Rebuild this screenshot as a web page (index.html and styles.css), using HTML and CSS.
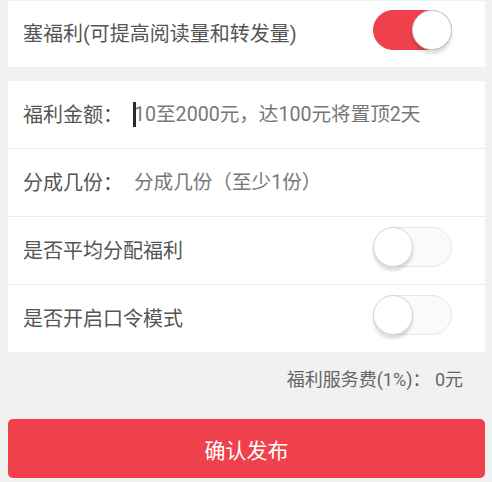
FILE: index.html
```html
<!DOCTYPE html>
<html lang="zh-CN">
<head>
    <meta charset="UTF-8">
    <meta name="viewport" content="width=device-width, initial-scale=1.0">
    <title>塞福利</title>
    <link rel="stylesheet" href="styles.css">
</head>
<body>
    <div class="page">
        <div class="card">
            <div class="row">
                <span class="label">塞福利(可提高阅读量和转发量)</span>
                <div class="switch on"><span class="knob"></span></div>
            </div>
        </div>

        <div class="card list">
            <div class="row">
                <span class="label field-label">福利金额：</span>
                <div class="field">
                    <span class="caret"></span>
                    <input type="text" placeholder="10至2000元，达100元将置顶2天">
                </div>
            </div>
            <div class="row">
                <span class="label field-label">分成几份：</span>
                <div class="field">
                    <input type="text" placeholder="分成几份（至少1份）">
                </div>
            </div>
            <div class="row">
                <span class="label">是否平均分配福利</span>
                <div class="switch"><span class="knob"></span></div>
            </div>
            <div class="row">
                <span class="label">是否开启口令模式</span>
                <div class="switch"><span class="knob"></span></div>
            </div>
        </div>

        <p class="fee">福利服务费(1%)：&nbsp;0元</p>

        <button class="submit">确认发布</button>
    </div>
</body>
</html>
```

FILE: styles.css
```css
body {
    margin: 0;
    padding: 0;
    background-color: #f1f1f1;
    font-family: Roboto, "Noto Sans CJK SC", sans-serif;
    color: #555;
}
.page {
    padding: 1px 7px 0 8px;
}
.card {
    background-color: #fff;
}
.list {
    margin-top: 14px;
}
.row {
    display: flex;
    align-items: center;
    height: 66px;
    padding: 0 33px 0 15px;
}
.list .row {
    height: 67px;
}
.list .row + .row {
    border-top: 1px solid #ebebeb;
}
.label {
    font-size: 20px;
    line-height: 24px;
    flex: 1;
}
.field-label {
    flex: none;
    width: 111px;
}
.field {
    position: relative;
    flex: 1;
    display: flex;
    align-items: center;
}
.field input {
    flex: 1;
    width: 100%;
    border: none;
    outline: none;
    padding: 0;
    margin: 0;
    font-family: inherit;
    font-size: 19.6px;
    line-height: 24px;
    color: #333;
    background: transparent;
}
.field input::placeholder {
    color: #777;
}
.caret {
    position: absolute;
    left: -1px;
    top: -1px;
    width: 3px;
    height: 25px;
    background-color: #2a2a2a;
}
.switch {
    position: relative;
    box-sizing: border-box;
    width: 79px;
    height: 40px;
    margin-bottom: 8px;
    border-radius: 20px;
    border: 1px solid #e6e6e6;
    background-color: #fafafa;
}
.switch.on {
    border-color: #ef414b;
    background-color: #ef414b;
}
.knob {
    position: absolute;
    left: -1px;
    top: -1px;
    box-sizing: border-box;
    width: 40px;
    height: 40px;
    border-radius: 50%;
    border: 1px solid #d4d4d4;
    background-color: #fff;
    box-shadow: 0 4px 3px rgba(0, 0, 0, 0.13);
}
.switch.on .knob {
    left: auto;
    right: -1px;
}
.fee {
    margin: 0;
    padding: 16px 22px 0 0;
    text-align: right;
    font-size: 18px;
    line-height: 24px;
    color: #666;
}
.submit {
    display: block;
    width: 100%;
    height: 59px;
    margin-top: 27px;
    border: none;
    border-radius: 5px;
    background-color: #ef414b;
    color: #fff;
    font-family: inherit;
    font-size: 21px;
    cursor: pointer;
}
```
